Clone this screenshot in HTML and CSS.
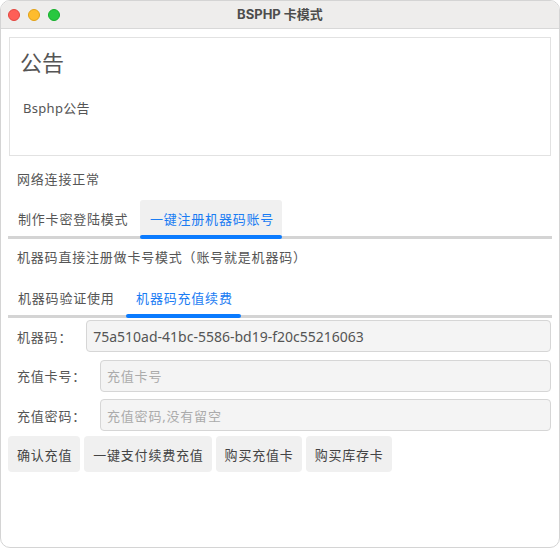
FILE: index.html
```html
<!DOCTYPE html>
<html lang="zh-CN">
<head>
  <meta charset="UTF-8" />
  <meta name="viewport" content="width=device-width, initial-scale=1" />
  <title>BSPHP 卡模式</title>
  <link rel="stylesheet" href="styles.css">
</head>
<body>
  <div class="window">
    <!-- Title bar with the three window buttons -->
    <header class="titlebar">
      <div class="lights">
        <span class="light light-close"></span>
        <span class="light light-min"></span>
        <span class="light light-max"></span>
      </div>
      <h1 class="title">BSPHP 卡模式</h1>
      <div></div>
    </header>

    <main class="content">
      <!-- Notice panel -->
      <section class="notice">
        <h2 class="notice-title">公告</h2>
        <p class="notice-body">Bsphp公告</p>
      </section>

      <p class="line status">网络连接正常</p>

      <!-- Mode tabs -->
      <nav class="tabs tabs-main">
        <button type="button" class="tab">制作卡密登陆模式</button>
        <button type="button" class="tab active">一键注册机器码账号</button>
      </nav>

      <p class="line hint">机器码直接注册做卡号模式<span class="punct">（</span>账号就是机器码<span class="punct">）</span></p>

      <nav class="tabs tabs-sub">
        <button type="button" class="tab">机器码验证使用</button>
        <button type="button" class="tab active">机器码充值续费</button>
      </nav>

      <!-- Recharge form -->
      <form class="recharge" onsubmit="return false">
        <label class="field">
          <span class="field-label">机器码<span class="punct">：</span></span>
          <input class="field-input" type="text" value="75a510ad-41bc-5586-bd19-f20c55216063" readonly />
        </label>
        <label class="field">
          <span class="field-label">充值卡号<span class="punct">：</span></span>
          <input class="field-input" type="text" placeholder="充值卡号" />
        </label>
        <label class="field">
          <span class="field-label">充值密码<span class="punct">：</span></span>
          <input class="field-input" type="password" placeholder="充值密码,没有留空" />
        </label>

        <div class="actions">
          <button type="submit" class="btn">确认充值</button>
          <button type="button" class="btn">一键支付续费充值</button>
          <button type="button" class="btn">购买充值卡</button>
          <button type="button" class="btn">购买库存卡</button>
        </div>
      </form>
    </main>
  </div>
</body>
</html>
```

FILE: styles.css
```css
/* Base */
body {
  margin: 0;
  background: #fff;
  font-family: "Noto Sans", "Noto Sans CJK SC", sans-serif;
  color: #555;
}
.window {
  width: 560px;
  height: 548px;
  box-sizing: border-box;
  border: 1px solid #d4d4d4;
  border-radius: 10px;
  overflow: hidden;
  background: #fff;
}

/* Title bar */
.titlebar {
  height: 27px;
  display: grid;
  grid-template-columns: 1fr auto 1fr;
  align-items: center;
  padding: 0 7px;
  background: #eeedec;
  border-bottom: 1px solid #d8d8d8;
}
.lights {
  display: flex;
  gap: 8px;
}
.light {
  width: 12px;
  height: 12px;
  border-radius: 50%;
  box-sizing: border-box;
}
.light-close {
  background: #fe5f57;
  border: 1px solid #e2463f;
}
.light-min {
  background: #febc2e;
  border: 1px solid #e1a116;
}
.light-max {
  background: #28c840;
  border: 1px solid #14ae2a;
}
.title {
  margin: 0;
  font-family: Inter, "Noto Sans CJK SC", sans-serif;
  font-size: 13px;
  font-weight: 700;
  color: #4d4d4d;
  line-height: 27px;
}

/* Content area */
.content {
  padding: 8px 7px 0;
}
.notice {
  margin: 0 1px;
  height: 119px;
  box-sizing: border-box;
  border: 1px solid #e2e2e2;
  padding: 9px 10px 0;
}
.notice-title {
  margin: 0;
  font-size: 22px;
  font-weight: 400;
  line-height: 30px;
  color: #555;
}
.notice-body {
  margin: 21px 0 0 3px;
  font-size: 13px;
  line-height: 20px;
  letter-spacing: 0.3px;
}
.line {
  margin: 0;
  padding-left: 9px;
  font-size: 13px;
  line-height: 20px;
  letter-spacing: 0.8px;
}
.status {
  margin-top: 13px;
}
.hint {
  margin-top: 8px;
}
/* full-width punctuation drawn centred in its cell */
.punct {
  font-family: "Noto Sans CJK TC", sans-serif;
}

/* Tabs */
.tabs {
  display: flex;
  gap: 3.5px;
  border-bottom: 3px solid #d4d4d4;
}
.tabs-main {
  margin-top: 11px;
}
.tabs-sub {
  margin-top: 12px;
}
.tab {
  position: relative;
  height: 36px;
  padding: 0 8px 0 10px;
  border: none;
  border-radius: 3px 3px 0 0;
  background: transparent;
  font-family: inherit;
  font-size: 13px;
  letter-spacing: 0.8px;
  color: #555;
  cursor: pointer;
}
.tab.active {
  color: #1a7cf3;
}
.tabs-main .tab.active {
  background: #f0f0f0;
}
/* blue indicator that sits over the grey rail */
.tab.active::after {
  content: "";
  position: absolute;
  left: 0;
  right: 0;
  bottom: -3px;
  height: 4px;
  border-radius: 2px;
  background: #0a7bff;
}

/* Recharge form */
.recharge {
  margin-top: 2px;
  display: flex;
  flex-direction: column;
  gap: 7.5px;
}
.field {
  display: flex;
  align-items: center;
  gap: 14px;
  padding: 0 1px 0 9px;
}
.field-label {
  font-size: 13px;
  letter-spacing: 0.8px;
  white-space: nowrap;
}
.field-input {
  flex: 1;
  height: 32px;
  box-sizing: border-box;
  padding: 0 6px;
  border: 1px solid #d6d6d6;
  border-radius: 4px;
  background: #f4f4f4;
  font-family: "Noto Sans", "Noto Sans CJK SC", sans-serif;
  font-size: 14px;
  color: #555;
  outline: none;
}
.field-input::placeholder {
  font-size: 13px;
  letter-spacing: 0.8px;
  color: #ababab;
}
.actions {
  display: flex;
  gap: 4px;
  margin-top: -2.5px;
}
.btn {
  height: 36px;
  padding: 0 8px 0 9px;
  border: none;
  border-radius: 4px;
  background: #f0f0f0;
  font-family: inherit;
  font-size: 13px;
  letter-spacing: 0.8px;
  color: #444;
  cursor: pointer;
}
```
